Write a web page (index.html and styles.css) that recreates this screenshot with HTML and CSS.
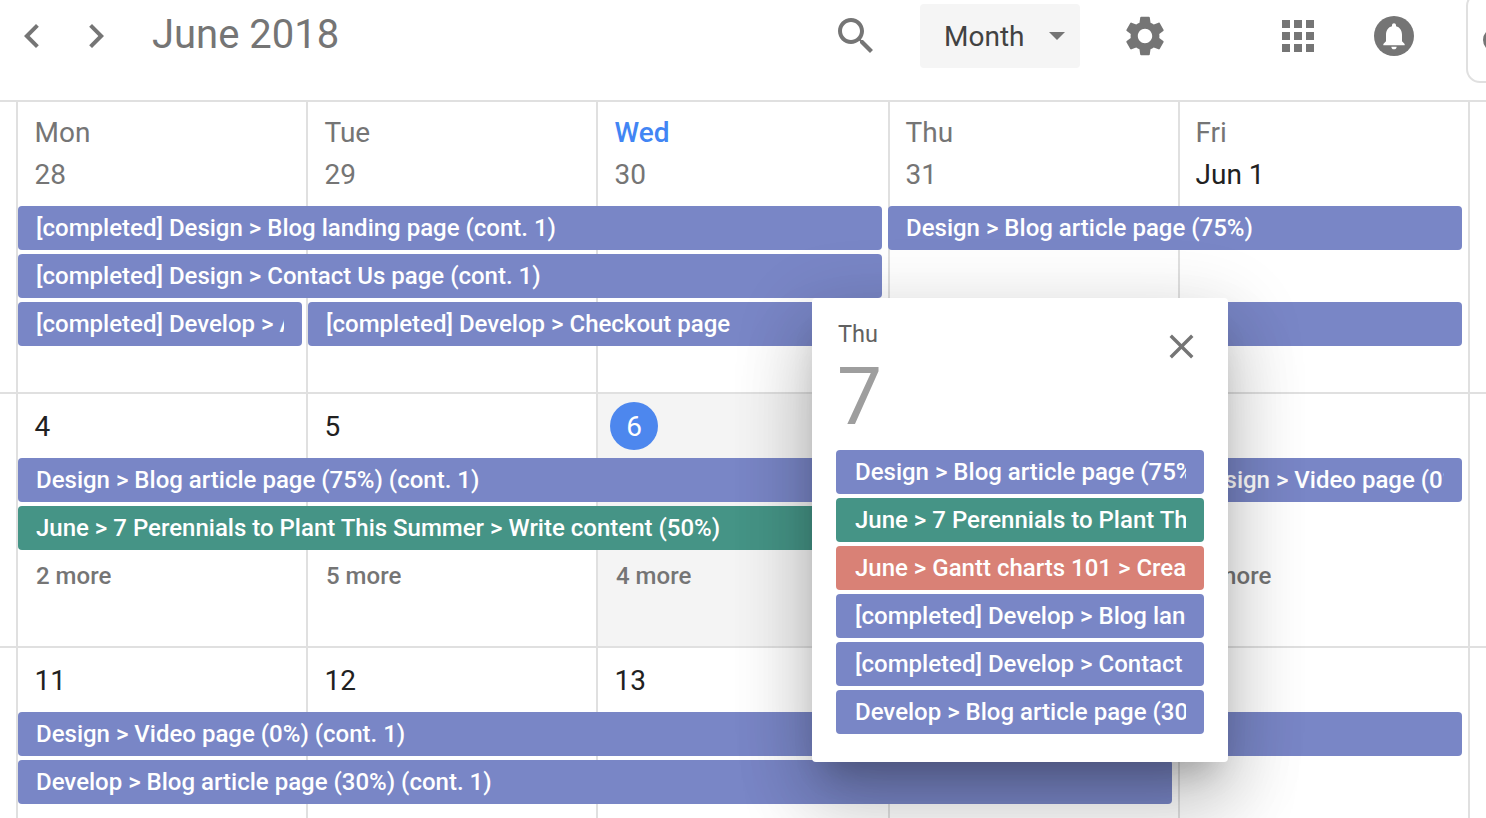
FILE: index.html
```html
<!DOCTYPE html>
<html lang="en">
<head>
<meta charset="utf-8">
<title>June 2018</title>
<link rel="stylesheet" href="styles.css">
</head>
<body>
<header class="topbar">
  <svg class="icon nav-prev" viewBox="0 0 24 24"><path d="M15.41 7.41L14 6l-6 6 6 6 1.41-1.41L10.83 12z"/></svg>
  <svg class="icon nav-next" viewBox="0 0 24 24"><path d="M10 6L8.59 7.41 13.17 12l-4.58 4.59L10 18l6-6z"/></svg>
  <h1 class="title">June 2018</h1>
  <svg class="icon search" viewBox="0 0 24 24"><path d="M15.5 14h-.79l-.28-.27C15.41 12.59 16 11.11 16 9.5 16 5.91 13.09 3 9.5 3S3 5.91 3 9.5 5.91 16 9.5 16c1.61 0 3.09-.59 4.23-1.57l.27.28v.79l5 4.99L20.49 19l-4.99-5zm-6 0C7.01 14 5 11.99 5 9.5S7.01 5 9.5 5 14 7.01 14 9.5 11.99 14 9.5 14z"/></svg>
  <div class="view-select"><span>Month</span><i class="caret"></i></div>
  <svg class="icon gear" viewBox="0 0 24 24"><path d="M19.14 12.94c.04-.3.06-.61.06-.94 0-.32-.02-.64-.07-.94l2.03-1.58c.18-.14.23-.41.12-.61l-1.92-3.32c-.12-.22-.37-.29-.59-.22l-2.39.96c-.5-.38-1.03-.7-1.62-.94l-.36-2.54c-.04-.24-.24-.41-.48-.41h-3.84c-.24 0-.43.17-.47.41l-.36 2.54c-.59.24-1.13.57-1.62.94l-2.39-.96c-.22-.08-.47 0-.59.22L2.74 8.87c-.12.21-.08.47.12.61l2.03 1.58c-.05.3-.09.63-.09.94s.02.64.07.94l-2.03 1.58c-.18.14-.23.41-.12.61l1.92 3.32c.12.22.37.29.59.22l2.39-.96c.5.38 1.03.7 1.62.94l.36 2.54c.05.24.24.41.48.41h3.84c.24 0 .44-.17.47-.41l.36-2.54c.59-.24 1.13-.56 1.62-.94l2.39.96c.22.08.47 0 .59-.22l1.92-3.32c.12-.22.07-.47-.12-.61l-2.01-1.58zM12 15.6c-1.98 0-3.6-1.62-3.6-3.6s1.62-3.6 3.6-3.6 3.6 1.62 3.6 3.6-1.62 3.6-3.6 3.6z"/></svg>
  <svg class="icon apps" viewBox="0 0 24 24"><path d="M4 8h4V4H4v4zm6 12h4v-4h-4v4zm-6 0h4v-4H4v4zm0-6h4v-4H4v4zm6 0h4v-4h-4v4zm6-10v4h4V4h-4zm-6 4h4V4h-4v4zm6 6h4v-4h-4v4zm0 6h4v-4h-4v4z"/></svg>
  <div class="bell"><svg class="bell-glyph" viewBox="0 0 24 24"><path d="M12 22c1.1 0 2-.9 2-2h-4c0 1.1.89 2 2 2zm6-6v-5c0-3.07-1.64-5.64-4.5-6.32V4c0-.83-.67-1.5-1.5-1.5s-1.5.67-1.5 1.5v.68C7.63 5.36 6 7.92 6 11v5l-2 2v1h16v-1l-2-2z"/></svg></div>
  <div class="side-tab"><i class="side-dot"></i></div>
</header>

<main class="calendar">
  <section class="week week-first">
    <div class="cell c1"><div class="dow">Mon</div><div class="num">28</div></div>
    <div class="cell c2"><div class="dow">Tue</div><div class="num">29</div></div>
    <div class="cell c3"><div class="dow dow-today">Wed</div><div class="num">30</div></div>
    <div class="cell c4"><div class="dow">Thu</div><div class="num">31</div></div>
    <div class="cell c5"><div class="dow">Fri</div><div class="num num-current">Jun 1</div></div>
    <div class="bar r1 from1 to4"><span>[completed] Design &gt; Blog landing page (cont. 1)</span></div>
    <div class="bar r1 from4 to6"><span>Design &gt; Blog article page (75%)</span></div>
    <div class="bar r2 from1 to4"><span>[completed] Design &gt; Contact Us page (cont. 1)</span></div>
    <div class="bar bar-narrow-gap r3 from1 to2"><span>[completed] Develop &gt; Apply</span></div>
    <div class="bar r3 from2 to6"><span>[completed] Develop &gt; Checkout page</span></div>
  </section>

  <section class="week week-second">
    <div class="cell c1"><div class="date">4</div></div>
    <div class="cell c2"><div class="date">5</div></div>
    <div class="cell c3 today"><div class="date"><span class="today-dot">6</span></div></div>
    <div class="cell c4"><div class="date">7</div></div>
    <div class="cell c5"><div class="date">8</div></div>
    <div class="bar r1 from1 to4"><span>Design &gt; Blog article page (75%) (cont. 1)</span></div>
    <div class="bar r1 from4 to5"><span></span></div>
    <div class="bar r1 from5 to6"><span>Design &gt; Video page (0%)</span></div>
    <div class="bar bar-green r2 from1 to5"><span>June &gt; 7 Perennials to Plant This Summer &gt; Write content (50%)</span></div>
    <div class="more r3 from1">2 more</div>
    <div class="more r3 from2">5 more</div>
    <div class="more r3 from3">4 more</div>
    <div class="more r3 from5">3 more</div>
  </section>

  <section class="week week-third">
    <div class="cell c1"><div class="date">11</div></div>
    <div class="cell c2"><div class="date">12</div></div>
    <div class="cell c3"><div class="date">13</div></div>
    <div class="cell c4"><div class="date">14</div></div>
    <div class="cell c5"><div class="date">15</div></div>
    <div class="bar r1 from1 to6"><span>Design &gt; Video page (0%) (cont. 1)</span></div>
    <div class="bar r2 from1 to5"><span>Develop &gt; Blog article page (30%) (cont. 1)</span></div>
  </section>
</main>

<aside class="popover">
  <div class="pop-head">
    <div>
      <div class="pop-dow">Thu</div>
      <div class="pop-num">7</div>
    </div>
    <svg class="icon close" viewBox="0 0 24 24"><path d="M19 6.41L17.59 5 12 10.59 6.41 5 5 6.41 10.59 12 5 17.59 6.41 19 12 13.41 17.59 19 19 17.59 13.41 12z"/></svg>
  </div>
  <div class="pop-list">
    <div class="bar"><span>Design &gt; Blog article page (75%)</span></div>
    <div class="bar bar-green"><span>June &gt; 7 Perennials to Plant This Summer</span></div>
    <div class="bar bar-red"><span>June &gt; Gantt charts 101 &gt; Create outline</span></div>
    <div class="bar"><span>[completed] Develop &gt; Blog landing page</span></div>
    <div class="bar"><span>[completed] Develop &gt; Contact Us page</span></div>
    <div class="bar"><span>Develop &gt; Blog article page (30%)</span></div>
  </div>
</aside>
</body>
</html>
```

FILE: styles.css
```css
* { box-sizing: border-box; }
html, body { margin: 0; height: 100%; overflow: hidden; background: #fff; }
body { font-family: Roboto, "Liberation Sans", sans-serif; color: #757575; position: relative; }

.icon { display: block; width: 48px; height: 48px; fill: #757575; flex: none; }

.topbar { height: 102px; border-bottom: 2px solid #e0e0e0; display: flex; align-items: flex-start; padding: 12px 0 0 8px; }
.nav-next { margin-left: 16px; }
.title { margin: 0 0 0 32px; font-size: 40px; font-weight: 400; line-height: 46px; color: #757575; width: 186px; flex: none; white-space: nowrap; }
.search { margin-left: 494px; }
.view-select { margin: -8px 0 0 40px; width: 160px; height: 64px; flex: none; background: #f5f5f5; border-radius: 4px; display: flex; align-items: center; justify-content: space-between; padding: 0 15px 0 24px; font-size: 28px; color: #424242; }
.caret { width: 0; height: 0; border: 8px solid transparent; border-top-color: #757575; border-bottom: 0; }
.gear { margin-left: 41px; }
.apps { margin-left: 105px; }
.bell { margin: 4px 0 0 52px; width: 40px; height: 40px; border-radius: 50%; background: #757575; display: flex; align-items: center; justify-content: center; flex: none; }
.bell-glyph { width: 32px; height: 32px; fill: #fff; }
.side-tab { margin: -20px 0 0 52px; width: 60px; height: 91px; flex: none; border: 2px solid #e0e0e0; border-radius: 14px; padding: 34px 0 0 15px; }
.side-dot { display: block; width: 24px; height: 24px; margin-top: 0; border-radius: 50%; background: #757575; }

.calendar { display: block; }
.week { display: grid; grid-template-columns: 16px 290px 290px 292px 290px 290px 2px 16px; grid-auto-rows: 48px; border-bottom: 2px solid #e0e0e0; width: 100%; }
.week::after { content: ""; grid-column: 7; grid-row: 1 / -1; background: #e0e0e0; }
.week-first { grid-template-rows: 104px 48px 48px 48px 42px; height: 292px; }
.week-second { grid-template-rows: 64px 48px 48px 48px 44px; height: 254px; }
.week-third { grid-template-rows: 64px 48px 48px 10px; height: 170px; border-bottom: 0; }

.cell { grid-row: 1 / -1; border-left: 2px solid #e0e0e0; padding-left: 16.5px; min-width: 0; }
.c1 { grid-column: 2; }
.c2 { grid-column: 3; }
.c3 { grid-column: 4; }
.c4 { grid-column: 5; padding-left: 15.5px; }
.c5 { grid-column: 6; padding-left: 15.5px; }
.today { background: #f4f4f4; }

.dow { font-size: 28px; line-height: 32px; margin-top: 15px; color: #757575; }
.dow-today { color: #4285f4; font-weight: 500; }
.num { font-size: 28px; line-height: 32px; margin-top: 10px; color: #757575; }
.num-current { color: #212121; }
.date { font-size: 28px; line-height: 32px; margin-top: 17px; color: #212121; position: relative; }
.today-dot { position: absolute; left: -4.5px; top: -8px; width: 48px; height: 48px; border-radius: 50%; background: #4d87ee; color: #fff; display: flex; align-items: center; justify-content: center; line-height: 48px; margin-top: -1px; padding-top: 1px; }

.bar { height: 44px; background: #7986c6; color: #fff; border-radius: 4px; padding: 0 18px; font-size: 24px; font-weight: 500; line-height: 45px; white-space: nowrap; min-width: 0; }
.bar span { display: block; overflow: hidden; height: 44px; }
.bar-green { background: #459486; }
.bar-red { background: #d98176; }

.week .bar { margin-right: 6px; }
.week .bar-narrow-gap { margin-right: 4px; }
.r1 { grid-row: 2; }
.r2 { grid-row: 3; }
.r3 { grid-row: 4; }
.from1 { grid-column-start: 2; margin-left: 2px; }
.from2 { grid-column-start: 3; margin-left: 2px; }
.from3 { grid-column-start: 4; margin-left: 2px; }
.from4 { grid-column-start: 5; }
.from5 { grid-column-start: 6; }
.to2 { grid-column-end: 3; }
.to4 { grid-column-end: 5; }
.to5 { grid-column-end: 6; }
.to6 { grid-column-end: 7; }

.more { font-size: 24px; font-weight: 500; line-height: 44px; padding-left: 18px; color: #757575; }

.popover { position: absolute; left: 812px; top: 298px; width: 416px; height: 464px; background: #fff; border-radius: 4px; padding: 20px 24px 0; box-shadow: 0 48px 76px 4px rgba(0,0,0,.14), 0 18px 76px 8px rgba(0,0,0,.14), 0 22px 30px -14px rgba(0,0,0,.2); }
.pop-head { display: flex; justify-content: space-between; height: 132px; }
.pop-dow { font-size: 23.5px; line-height: 32px; color: #616161; margin-left: 2px; }
.pop-num { font-size: 80px; font-weight: 400; line-height: 86px; color: #9e9e9e; margin: 4px 0 0 1px; }
.close { width: 41px; height: 41px; margin: 8px 2.5px 0 0; }
.pop-list { display: flex; flex-direction: column; gap: 4px; }
.pop-list .bar { padding-left: 19px; }
```
